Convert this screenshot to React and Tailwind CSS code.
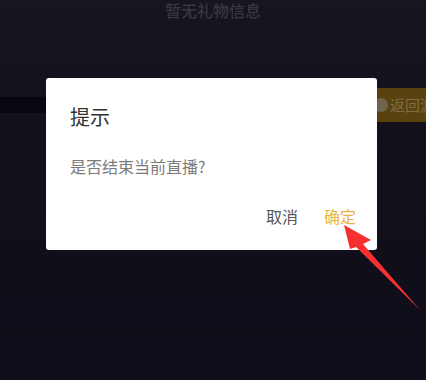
import React from "react";

const cjk = { fontFamily: '"Noto Sans CJK SC", "Noto Sans", sans-serif' };

const App = () => {
  return (
    <div
      className="relative w-[426px] h-[380px] overflow-hidden bg-gradient-to-b from-[#17151e] via-[#100f1a] to-[#0e0d19]"
      style={cjk}
    >
      {/* 背景页面 (被遮罩压暗) */}
      <div className="flex flex-col">
        <div className="text-center text-[16px] leading-[20px] font-medium text-[#383641]">暂无礼物信息</div>
        <div className="mt-[68px] flex items-start justify-between">
          <div className="mt-[9px] w-[60px] h-[16px] bg-[#07070f]" />
          <div className="flex items-center h-[34px] w-[64px] pl-[12px] rounded-l-[8px] bg-[#5a420e] overflow-hidden">
            <span className="shrink-0 w-[14px] h-[14px] rounded-full bg-[#6e6450]" />
            <span className="ml-[2px] shrink-0 whitespace-nowrap text-[15px] text-[#7e6c45]">返回游戏</span>
          </div>
        </div>
      </div>

      {/* 弹窗 */}
      <div className="absolute left-[46px] top-[78px] w-[331px] h-[172px] rounded-[3px] bg-white flex flex-col pl-[24px] pr-[21px] pt-[25px]">
        <div className="text-[20px] leading-[28px] text-[#333333]">提示</div>
        <div className="mt-[23px] text-[16px] leading-[24px] text-[#7a7a7a]">是否结束当前直播?</div>
        <div className="mt-[26px] flex justify-end gap-[26px] text-[16px] leading-[24px]">
          <span className="text-[#555555]">取消</span>
          <span className="text-[#ebb53d]">确定</span>
        </div>
      </div>

      {/* 红色箭头 */}
      <svg className="absolute left-0 top-0" width="426" height="380" viewBox="0 0 426 380">
        <polygon points="344,225 371,240 363,244 420,310 356,247 350,249" fill="#f5302f" />
      </svg>
    </div>
  );
};

export default App;
